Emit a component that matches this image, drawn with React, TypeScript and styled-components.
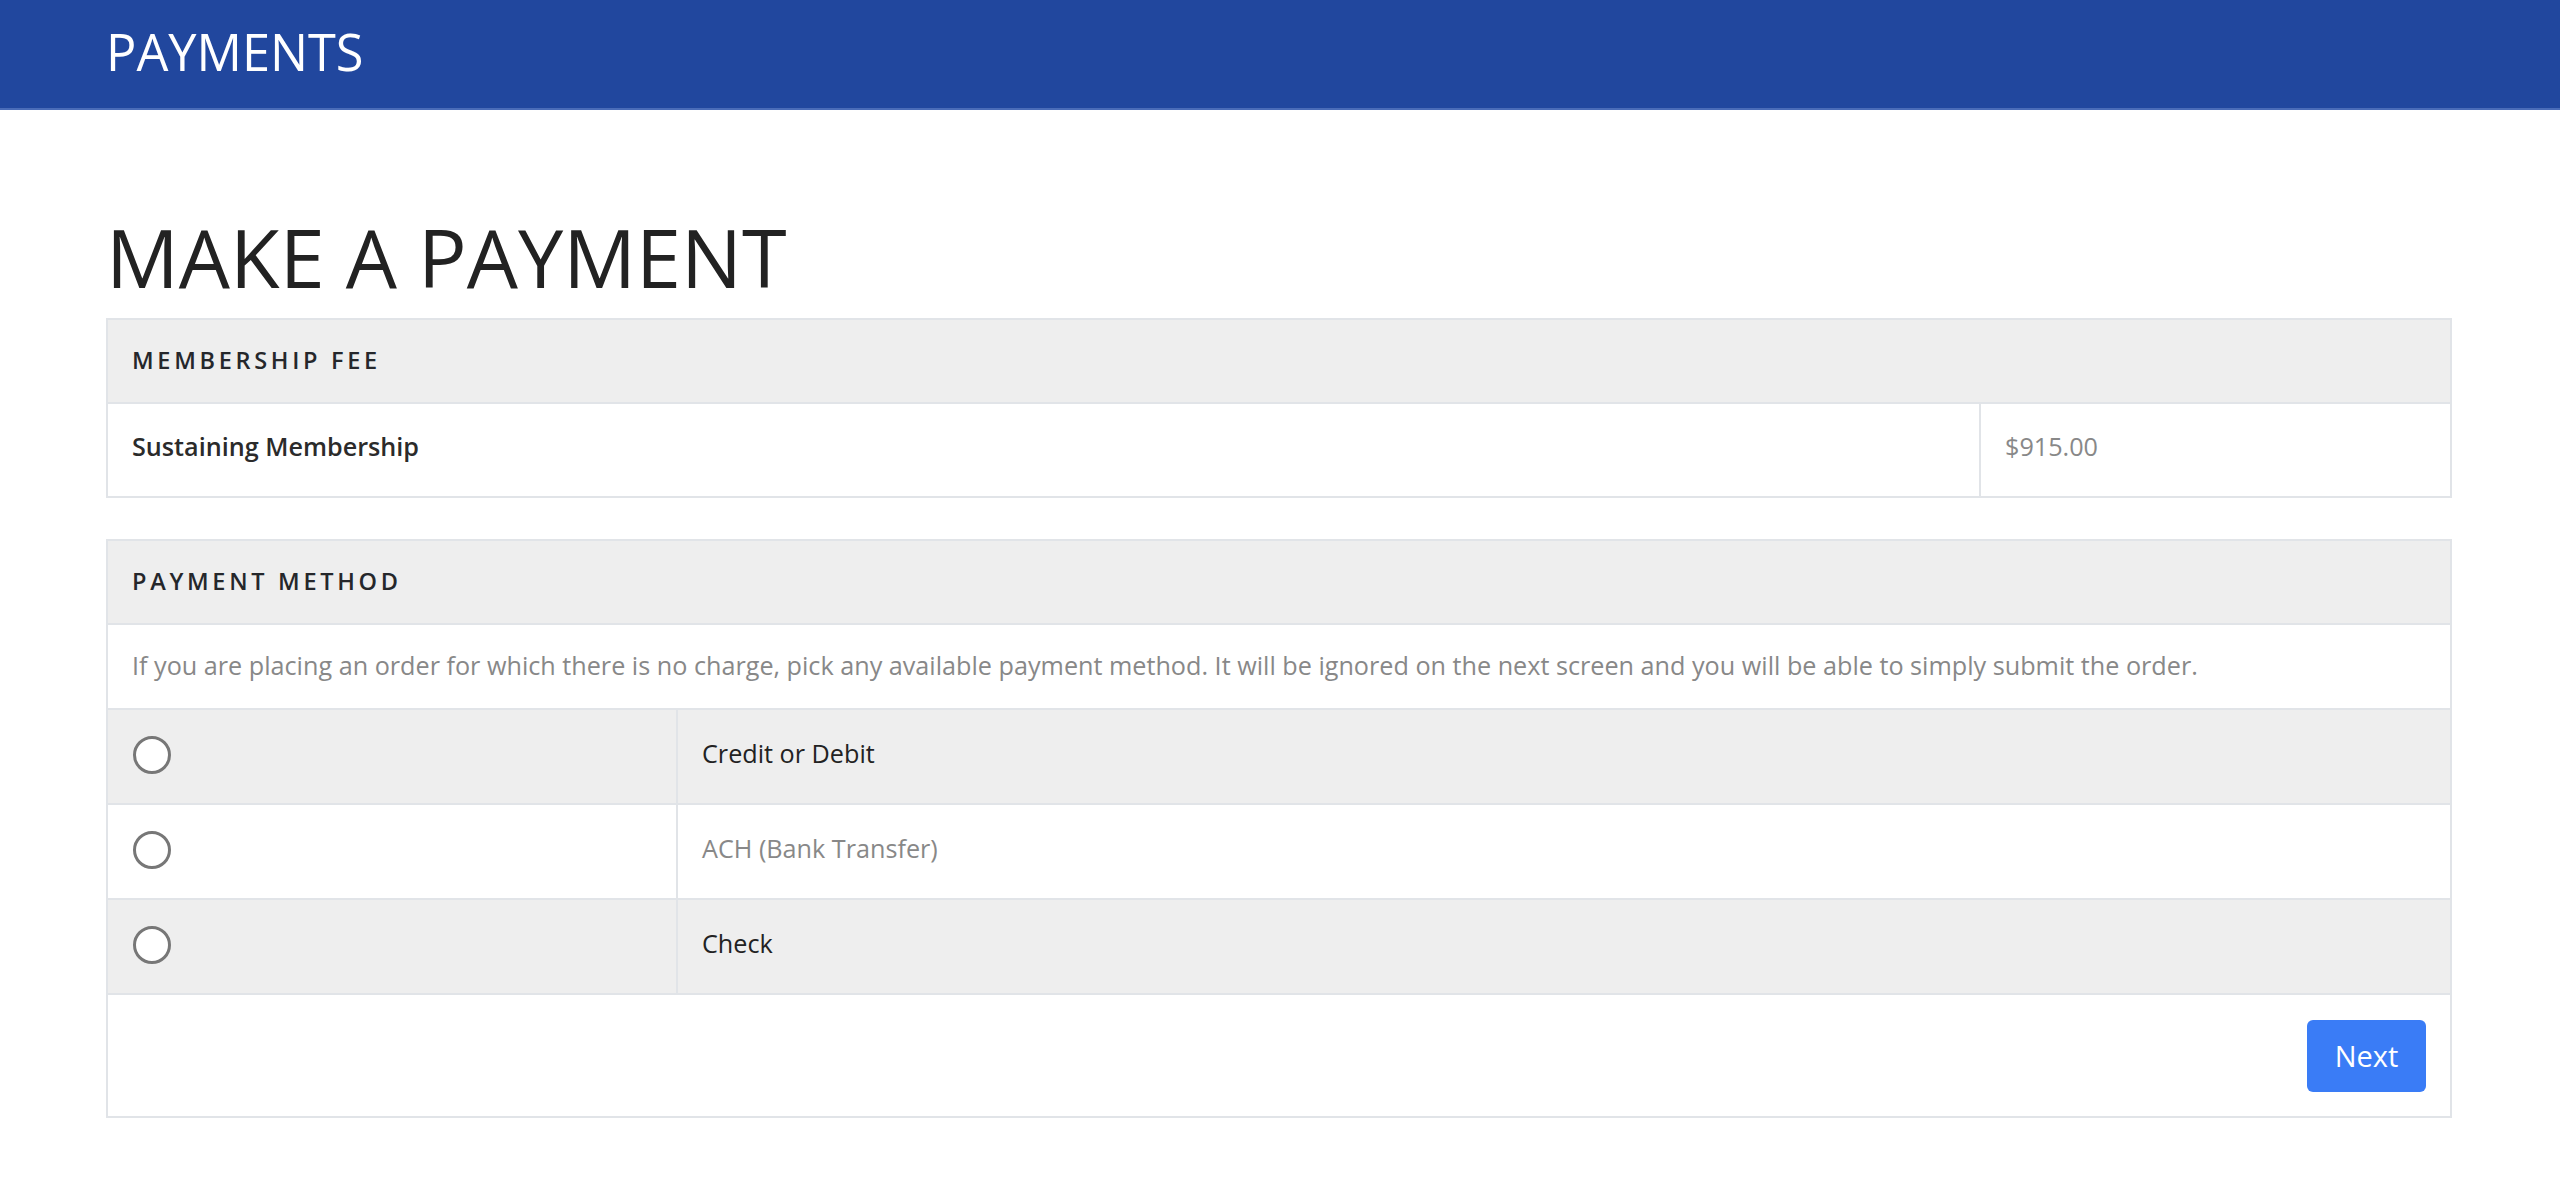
import React from "react";
import styled, { createGlobalStyle } from "styled-components";

const GlobalStyle = createGlobalStyle`
  * { box-sizing: border-box; }
  body {
    margin: 0;
    background: #ffffff;
    font-family: "Open Sans", "Noto Sans", sans-serif;
    color: #222222;
  }
`;

const TopBar = styled.header`
  height: 110px;
  background: #21479e;
  display: flex;
  align-items: center;
  padding: 0 106px;
  border-bottom: 2px solid #4a6cb8;
`;

const BarTitle = styled.div`
  color: #ffffff;
  font-size: 50.5px;
  font-weight: 400;
  line-height: 1;
  margin-top: -4px;
`;

const Main = styled.main`
  padding: 0 108px 60px 106px;
`;

const PageTitle = styled.h1`
  margin: 98px 0 13px;
  font-size: 81px;
  font-weight: 400;
  line-height: 1.2;
  color: #222222;
`;

const Card = styled.section`
  border: 2px solid #e1e4e8;
  margin-bottom: 41px;
`;

const CardHeader = styled.div`
  height: 84px;
  display: flex;
  align-items: center;
  padding: 0 24px 2px;
  background: #eeeeee;
  border-bottom: 2px solid #e1e4e8;
  font-size: 23.5px;
  font-weight: 600;
  letter-spacing: 3.7px;
  color: #25272b;
`;

const Row = styled.div<{ $shaded?: boolean; $height: number; $last?: boolean }>`
  display: flex;
  height: ${(p) => p.$height}px;
  background: ${(p) => (p.$shaded ? "#eeeeee" : "#ffffff")};
  border-bottom: ${(p) => (p.$last ? "none" : "2px solid #e1e4e8")};
`;

const Cell = styled.div<{ $width?: number; $divider?: boolean; $tone?: "dark" | "muted"; $bold?: boolean }>`
  display: flex;
  align-items: center;
  padding: 0 24px 8px;
  ${(p) => (p.$width ? `width: ${p.$width}px; flex: none;` : "flex: 1;")}
  ${(p) => (p.$divider ? "border-left: 2px solid #e1e4e8;" : "")}
  font-size: 25.2px;
  font-weight: ${(p) => (p.$bold ? 600 : 400)};
  color: ${(p) => (p.$tone === "muted" ? "#888888" : p.$bold ? "#2b2b2b" : "#222222")};
`;

const Note = styled.div`
  height: 85px;
  display: flex;
  align-items: center;
  padding: 0 24px 4px;
  border-bottom: 2px solid #e1e4e8;
  font-size: 25.2px;
  color: #888888;
`;

const Radio = styled.span`
  width: 38px;
  height: 38px;
  border-radius: 50%;
  border: 3px solid #777777;
  background: #ffffff;
  display: inline-block;
  margin-top: 4px;
  margin-left: 1px;
`;

const Footer = styled.div`
  display: flex;
  justify-content: flex-end;
  padding: 25px 24px 24px;
`;

const NextButton = styled.button`
  width: 119px;
  height: 72px;
  border: none;
  border-radius: 6px;
  background: #3a7cf6;
  color: #ffffff;
  font-family: "Open Sans", "Noto Sans", sans-serif;
  font-size: 29px;
  font-weight: 400;
  padding: 0 0 2px;
  cursor: pointer;
`;

const methods = [
  { label: "Credit or Debit", muted: false },
  { label: "ACH (Bank Transfer)", muted: true },
  { label: "Check", muted: false },
];

export default function App() {
  return (
    <>
      <GlobalStyle />
      <TopBar>
        <BarTitle>PAYMENTS</BarTitle>
      </TopBar>
      <Main>
        <PageTitle>MAKE A PAYMENT</PageTitle>
        <Card>
          <CardHeader>MEMBERSHIP FEE</CardHeader>
          <Row $height={92} $last>
            <Cell $bold>Sustaining Membership</Cell>
            <Cell $width={471} $divider $tone="muted">
              $915.00
            </Cell>
          </Row>
        </Card>
        <Card>
          <CardHeader>PAYMENT METHOD</CardHeader>
          <Note>
            If you are placing an order for which there is no charge, pick any available payment method. It will be
            ignored on the next screen and you will be able to simply submit the order.
          </Note>
          {methods.map((m, i) => (
            <Row key={m.label} $height={95} $shaded={i % 2 === 0}>
              <Cell $width={568}>
                <Radio />
              </Cell>
              <Cell $divider $tone={m.muted ? "muted" : "dark"}>
                {m.label}
              </Cell>
            </Row>
          ))}
          <Footer>
            <NextButton>Next</NextButton>
          </Footer>
        </Card>
      </Main>
    </>
  );
}
